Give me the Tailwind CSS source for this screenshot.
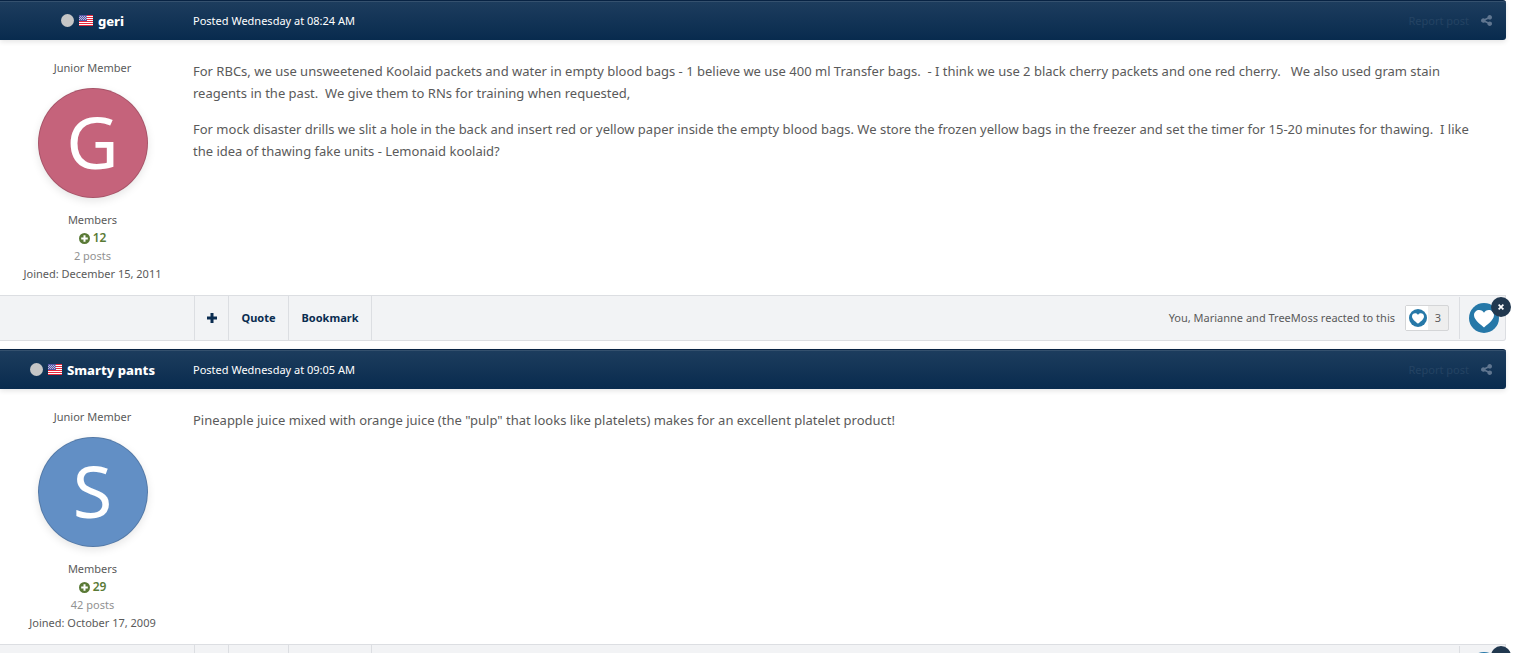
<!DOCTYPE html>
<html lang="en">
<head>
<meta charset="utf-8">
<meta name="viewport" content="width=device-width, initial-scale=1">
<title>Forum topic</title>
<script src="https://cdn.jsdelivr.net/npm/@tailwindcss/browser@4"></script>
</head>
<body class="bg-white">
<svg class="hidden" aria-hidden="true">
  <symbol id="flag" viewBox="0 0 14 11">
    <path fill="#fff" d="M0 0h14v11H0z"/>
    <path fill="#e8283c" d="M0 0h14v1H0zM0 2h14v1H0zM0 4h14v1H0zM0 6h14v1H0zM0 8h14v1H0zM0 10h14v1H0z"/>
    <path fill="#5656a4" d="M0 0h8v6H0z"/>
    <path fill="#b9b9dc" d="M1 1h1v1H1zM3 1h1v1H3zM5 1h1v1H5zM7 1h1v1H7zM0 2h1v1H0zM2 2h1v1H2zM4 2h1v1H4zM6 2h1v1H6zM1 3h1v1H1zM3 3h1v1H3zM5 3h1v1H5zM7 3h1v1H7zM0 4h1v1H0zM2 4h1v1H2zM4 4h1v1H4zM6 4h1v1H6z"/>
  </symbol>
  <symbol id="share" viewBox="0 0 1536 1536">
    <path d="M1216 896q133 0 226.500 93.500t93.500 226.500-93.500 226.500-226.500 93.500-226.500-93.500-93.500-226.500q0-12 2-34l-360-180q-92 86-218 86-133 0-226.500-93.500t-93.500-226.500 93.500-226.500 226.500-93.500q126 0 218 86l360-180q-2-22-2-34 0-133 93.500-226.500t226.500-93.500 226.500 93.500 93.500 226.500-93.500 226.500-226.500 93.500q-126 0-218-86l-360 180q2 22 2 34t-2 34l360 180q92-86 218-86z"/>
  </symbol>
  <symbol id="plus-circle" viewBox="0 0 11 11">
    <path fill-rule="evenodd" d="M5.500 0a5.500 5.500 0 1 1 0 11a5.500 5.500 0 1 1 0-11zM4.500 2.200v2.300H2.200v2h2.300v2.300h2V6.500h2.300v-2H6.500V2.200z"/>
  </symbol>
  <symbol id="heart" viewBox="0 0 30 30">
    <circle cx="15" cy="15" r="15" fill="#2678a8"/>
    <path fill="#fff" d="M15 24.500C13.500 22.700 5 17.500 5 12.300C5 9 7.500 7 10.200 7C12.500 7 14.200 8.100 15 9.800C15.800 8.100 17.500 7 19.800 7C22.500 7 25 9 25 12.300C25 17.500 16.500 22.700 15 24.500z"/>
  </symbol>
</svg>
<main class="flex h-screen flex-col gap-2 overflow-hidden pr-2.5 font-['Noto_Sans','Open_Sans',sans-serif] text-[11px] leading-[18px] text-[#5a5a5a]">
  <article class="shrink-0">
    <header class="flex h-10 items-center rounded-r-[3px] border-t border-[#082343] bg-linear-to-b from-[#1d3d5e] to-[#082b4e] text-white shadow-[inset_0_1px_0_#35516e,0_2px_5px_rgba(0,0,0,0.1)]">
      <h3 class="flex w-[185px] shrink-0 items-center justify-center gap-[5px] self-stretch text-[13px] font-extrabold">
        <span class="size-[13px] rounded-full bg-[#c6c6c6]"></span>
        <svg class="h-[11px] w-[14px]"><use href="#flag"/></svg>
        <a href="#">geri</a>
      </h3>
      <a href="#" class="pl-2">Posted Wednesday at 08:24 AM</a>
      <div class="ml-auto flex items-center gap-3 pr-3.5">
        <a href="#" class="text-[#244363]">Report post</a>
        <a href="#" aria-label="Share"><svg class="size-[11px] fill-[#607690]"><use href="#share"/></svg></a>
      </div>
    </header>
    <div class="flex pb-3">
      <aside class="flex w-[185px] shrink-0 flex-col items-center pt-[19px]">
        <span>Junior Member</span>
        <a href="#" class="mt-[11px] mb-[13px] flex size-[110px] items-center justify-center rounded-full border border-black/15 bg-[#c5637b] pb-1 text-[72px] text-white shadow-[0_3px_8px_rgba(0,0,0,0.1)]">G</a>
        <span>Members</span>
        <span class="flex items-center gap-[3px] text-[12px] font-semibold text-[#5a7a36]"><svg class="size-[11px] fill-current"><use href="#plus-circle"/></svg>12</span>
        <a href="#" class="text-[#929292]">2 posts</a>
        <span>Joined: December 15, 2011</span>
      </aside>
      <div class="flex flex-1 flex-col gap-3.5 pt-5 pr-5 pl-2 text-[13px] leading-[22px]">
        <p>For RBCs, we use unsweetened Koolaid packets and water in empty blood bags - 1 believe we use 400 ml Transfer bags.&nbsp; - I think we use 2 black cherry packets and one red cherry.&nbsp;&nbsp; We also used gram stain reagents in the past.&nbsp; We give them to RNs for training when requested,</p>
        <p>For mock disaster drills we slit a hole in the back and insert red or yellow paper inside the empty blood bags. We store the frozen yellow bags in the freezer and set the timer for 15-20 minutes for thawing.&nbsp; I like the idea of thawing fake units - Lemonaid koolaid?</p>
      </div>
    </div>
    <footer class="flex h-[46px] rounded-br-[3px] border-y border-r border-[#dcdee2] bg-[#f2f3f5] pl-[194px]">
      <div class="flex font-bold text-[#0a2c50]">
        <button class="flex w-[34px] items-center justify-center border-l border-[#dcdee2]" aria-label="Multiquote"><svg class="size-[10px] fill-current" viewBox="0 0 10 10"><path d="M3.500 0h3v3.500H10v3H6.500V10h-3V6.500H0v-3h3.500z"/></svg></button>
        <button class="w-[60px] border-l border-[#dcdee2]">Quote</button>
        <button class="w-[84px] border-x border-[#dcdee2]">Bookmark</button>
      </div>
      <div class="ml-auto flex items-center">
        <span>You, Marianne and TreeMoss reacted to this</span>
        <a href="#" class="mr-2.5 ml-2.5 flex h-[26px] w-11 items-center rounded-[2px] border border-[#d4d5d7] bg-[#eeeeee]"><span class="flex h-full w-[22px] items-center justify-center bg-white pl-0.5"><svg class="size-[18px]"><use href="#heart"/></svg></span><span class="flex-1 text-center">3</span></a>
        <div class="flex h-[42px] items-center border-l border-[#dcdee2] pr-1.5 pl-[9px]">
          <div class="relative size-[30px]">
            <button aria-label="Like" class="block"><svg class="size-[30px]"><use href="#heart"/></svg></button>
            <button aria-label="Remove reaction" class="absolute -top-1.5 -right-3 flex size-5 items-center justify-center rounded-full bg-[#21384f]"><svg class="size-[6px] stroke-white" viewBox="0 0 7 7" stroke-width="2"><path d="M.7 .7l5.600 5.600M6.300 .7L.7 6.300"/></svg></button>
          </div>
        </div>
      </div>
    </footer>
  </article>
  <article class="shrink-0">
    <header class="flex h-10 items-center rounded-r-[3px] border-t border-[#082343] bg-linear-to-b from-[#1d3d5e] to-[#082b4e] text-white shadow-[inset_0_1px_0_#35516e,0_2px_5px_rgba(0,0,0,0.1)]">
      <h3 class="flex w-[185px] shrink-0 items-center justify-center gap-[5px] self-stretch text-[13px] font-extrabold">
        <span class="size-[13px] rounded-full bg-[#c6c6c6]"></span>
        <svg class="h-[11px] w-[14px]"><use href="#flag"/></svg>
        <a href="#">Smarty pants</a>
      </h3>
      <a href="#" class="pl-2">Posted Wednesday at 09:05 AM</a>
      <div class="ml-auto flex items-center gap-3 pr-3.5">
        <a href="#" class="text-[#244363]">Report post</a>
        <a href="#" aria-label="Share"><svg class="size-[11px] fill-[#607690]"><use href="#share"/></svg></a>
      </div>
    </header>
    <div class="flex pb-3">
      <aside class="flex w-[185px] shrink-0 flex-col items-center pt-[19px]">
        <span>Junior Member</span>
        <a href="#" class="mt-[11px] mb-[13px] flex size-[110px] items-center justify-center rounded-full border border-black/15 bg-[#628fc5] pb-1 text-[72px] text-white shadow-[0_3px_8px_rgba(0,0,0,0.1)]">S</a>
        <span>Members</span>
        <span class="flex items-center gap-[3px] text-[12px] font-semibold text-[#5a7a36]"><svg class="size-[11px] fill-current"><use href="#plus-circle"/></svg>29</span>
        <a href="#" class="text-[#929292]">42 posts</a>
        <span>Joined: October 17, 2009</span>
      </aside>
      <div class="flex flex-1 flex-col gap-3.5 pt-5 pr-5 pl-2 text-[13px] leading-[22px]">
        <p>Pineapple juice mixed with orange juice (the "pulp" that looks like platelets) makes for an excellent platelet product!</p>
      </div>
    </div>
    <footer class="flex h-[46px] rounded-br-[3px] border-y border-r border-[#dcdee2] bg-[#f2f3f5] pl-[194px]">
      <div class="flex font-bold text-[#0a2c50]">
        <button class="w-[34px] border-l border-[#dcdee2]" aria-label="Multiquote"></button>
        <button class="w-[60px] border-l border-[#dcdee2]" aria-label="Quote"></button>
        <button class="w-[84px] border-x border-[#dcdee2]" aria-label="Bookmark"></button>
      </div>
      <div class="ml-auto flex items-center">
        <div class="flex h-[42px] items-center border-l border-[#dcdee2] pr-1.5 pl-[9px]">
          <div class="relative size-[30px]">
            <button aria-label="Like" class="block"><svg class="size-[30px]"><use href="#heart"/></svg></button>
            <button aria-label="Remove reaction" class="absolute -top-1.5 -right-3 flex size-5 items-center justify-center rounded-full bg-[#21384f]"><svg class="size-[6px] stroke-white" viewBox="0 0 7 7" stroke-width="2"><path d="M.7 .7l5.600 5.600M6.300 .7L.7 6.300"/></svg></button>
          </div>
        </div>
      </div>
    </footer>
  </article>
</main>
</body>
</html>
